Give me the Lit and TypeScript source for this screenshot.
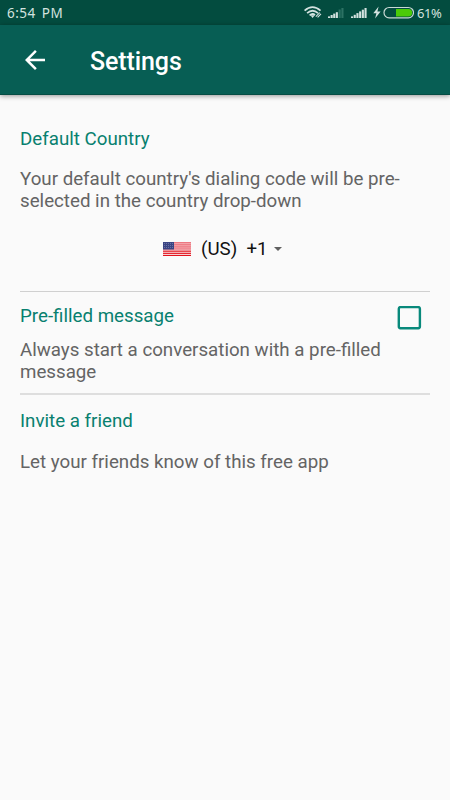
import { LitElement, html, css, svg } from "lit";
import { customElement } from "lit/decorators.js";

@customElement("status-bar")
class StatusBar extends LitElement {
  static styles = css`
    :host { display: flex; align-items: center; justify-content: space-between; height: 25px; padding: 0 8px 0 7px; background: #034c3f; color: #d3e2df; font: 13px/25px "Noto Sans", sans-serif; }
    .time { font-size: 13.5px; letter-spacing: 0.5px; word-spacing: 2px; padding-top: 1px; }
    .right { display: flex; align-items: center; height: 25px; }
    .pct { width: 25px; margin-left: 3px; padding-top: 1px; white-space: nowrap; font-size: 13px; letter-spacing: -0.4px; }
    svg { display: block; }
  `;
  render() {
    const bar = (x: number, top: number, dim = false) =>
      svg`<rect x=${x} y=${top} width="2.1" height=${18 - top} fill=${dim ? "#2c7264" : "#d3e2df"}/>`;
    return html`
      <span class="time">6:54 PM</span>
      <div class="right">
        <svg width="111" height="25" viewBox="303 0 111 25">
          <g fill="none" stroke="#d3e2df" stroke-width="1.8">
            <path d="M304.6 10.6Q312.5 3.6 320.5 10.6"/>
            <path d="M307.1 13.1Q312.6 8.4 318 13.1"/>
            <path d="M309.6 15.4Q312.6 12.8 315 15.2"/>
            <path d="M315.8 16.7l4-4M317.6 17.3l3.4-3.4" stroke-width="1.1"/>
          </g>
          <path d="M310.4 15.2h4.4l-2.2 2.7z" fill="#d3e2df"/>
          ${bar(328, 16.4)}${bar(330.6, 15)}${bar(333.2, 13.6)}${bar(335.8, 12.2)}${bar(338.6, 9.5, true)}${bar(341.4, 8, true)}
          ${bar(351, 16.4)}${bar(353.7, 14.8)}${bar(356.4, 13.1)}${bar(359.1, 11.4)}${bar(361.8, 9.7)}${bar(364.5, 8)}
          <path d="M378.6 6.5l-5.3 6.8h3.1l-1.3 5.2 5.5-7h-3.2z" fill="#d3e2df"/>
          <rect x="384" y="7.5" width="29.5" height="10.3" rx="5.1" fill="#034c3f" stroke="#c9d9d5" stroke-width="1.2"/>
          <path d="M396 9h12.5a3.6 3.6 0 0 1 0 7.4H396z" fill="#4bcb08"/>
        </svg>
        <span class="pct">61%</span>
      </div>`;
  }
}

@customElement("app-toolbar")
class AppToolbar extends LitElement {
  static styles = css`
    :host { display: flex; align-items: center; height: 70px; box-sizing: border-box; padding-left: 20px; background: #075e54; border-bottom: 1px solid #054d44; box-shadow: 0 1px 5px rgba(0, 0, 0, 0.42); color: #fff; }
    svg { display: block; }
    h1 { margin: 4px 0 0 40px; font: 500 25px/30px Roboto, sans-serif; letter-spacing: -0.1px; }
  `;
  render() {
    return html`
      <svg width="30" height="30" viewBox="0 0 24 24"><path fill="#fff" d="M20 11H7.83l5.59-5.59L12 4l-8 8 8 8 1.41-1.41L7.83 13H20v-2z"/></svg>
      <h1>Settings</h1>`;
  }
}

@customElement("us-flag")
class UsFlag extends LitElement {
  static styles = css`:host, svg { display: block; }`;
  render() {
    return html`<svg width="28" height="14" viewBox="0 0 28 14">
      <rect width="28" height="14" fill="#f9e4e6"/>
      <rect width="28" height="7.5" fill="#f4a9ae"/>
      ${[0, 2.15, 4.3, 6.45].map((y) => svg`<rect y=${y} width="28" height="1.1" fill="#ed7780"/>`)}
      ${[8.6, 10.75, 12.9].map((y) => svg`<rect y=${y} width="28" height="1.15" fill="#e3131d"/>`)}
      <rect width="11" height="7.5" fill="#3b4584"/>
      ${[1, 3, 5].map((y) => [1, 3, 5, 7, 9].map((x) => svg`<rect x=${x} y=${y} width="1" height="1" fill="#6a72a2"/>`))}
    </svg>`;
  }
}

@customElement("app-root")
class AppRoot extends LitElement {
  static styles = css`
    :host { display: flex; flex-direction: column; height: 800px; background: #fafafa; font: 18.73px/22px Roboto, sans-serif; color: #646464; overflow: hidden; }
    main { padding: 0 20px; }
    h2 { margin: 0; font: inherit; color: #08806f; }
    p { margin: 0; }
    .country { height: 197px; box-sizing: border-box; padding-top: 33px; border-bottom: 1px solid #d0d0d0; }
    .country p { margin-top: 18px; }
    .picker { display: flex; align-items: center; margin: 26px 0 0 143px; height: 22px; color: #111; }
    .code { margin-left: 10px; white-space: pre; }
    .caret { margin-left: 6px; border: solid transparent; border-width: 4px 4px 0; border-top-color: #606060; }
    .prefill { height: 88px; padding-top: 13px; border-bottom: 2px solid #dedede; display: flex; }
    .prefill .text { width: 370px; }
    .prefill p { margin-top: 12px; }
    .box { display: block; margin: 1px 0 0 7px; }
    .invite { padding-top: 15px; }
    .invite p { margin-top: 19px; }
  `;
  render() {
    return html`
      <status-bar></status-bar>
      <app-toolbar></app-toolbar>
      <main>
        <section class="country">
          <h2>Default Country</h2>
          <p>Your default country's dialing code will be pre-<br>selected in the country drop-down</p>
          <div class="picker"><us-flag></us-flag><span class="code">(US)  +1</span><span class="caret"></span></div>
        </section>
        <section class="prefill">
          <div class="text">
            <h2>Pre-filled message</h2>
            <p>Always start a conversation with a pre-filled<br>message</p>
          </div>
          <svg class="box" width="25" height="24" viewBox="0 0 25 24" role="checkbox" aria-checked="false">
            <rect x="1.8" y="1.1" width="21.1" height="21.1" rx="1.6" fill="none" stroke="#08897b" stroke-width="2.4"/>
          </svg>
        </section>
        <section class="invite">
          <h2>Invite a friend</h2>
          <p>Let your friends know of this free app</p>
        </section>
      </main>`;
  }
}
